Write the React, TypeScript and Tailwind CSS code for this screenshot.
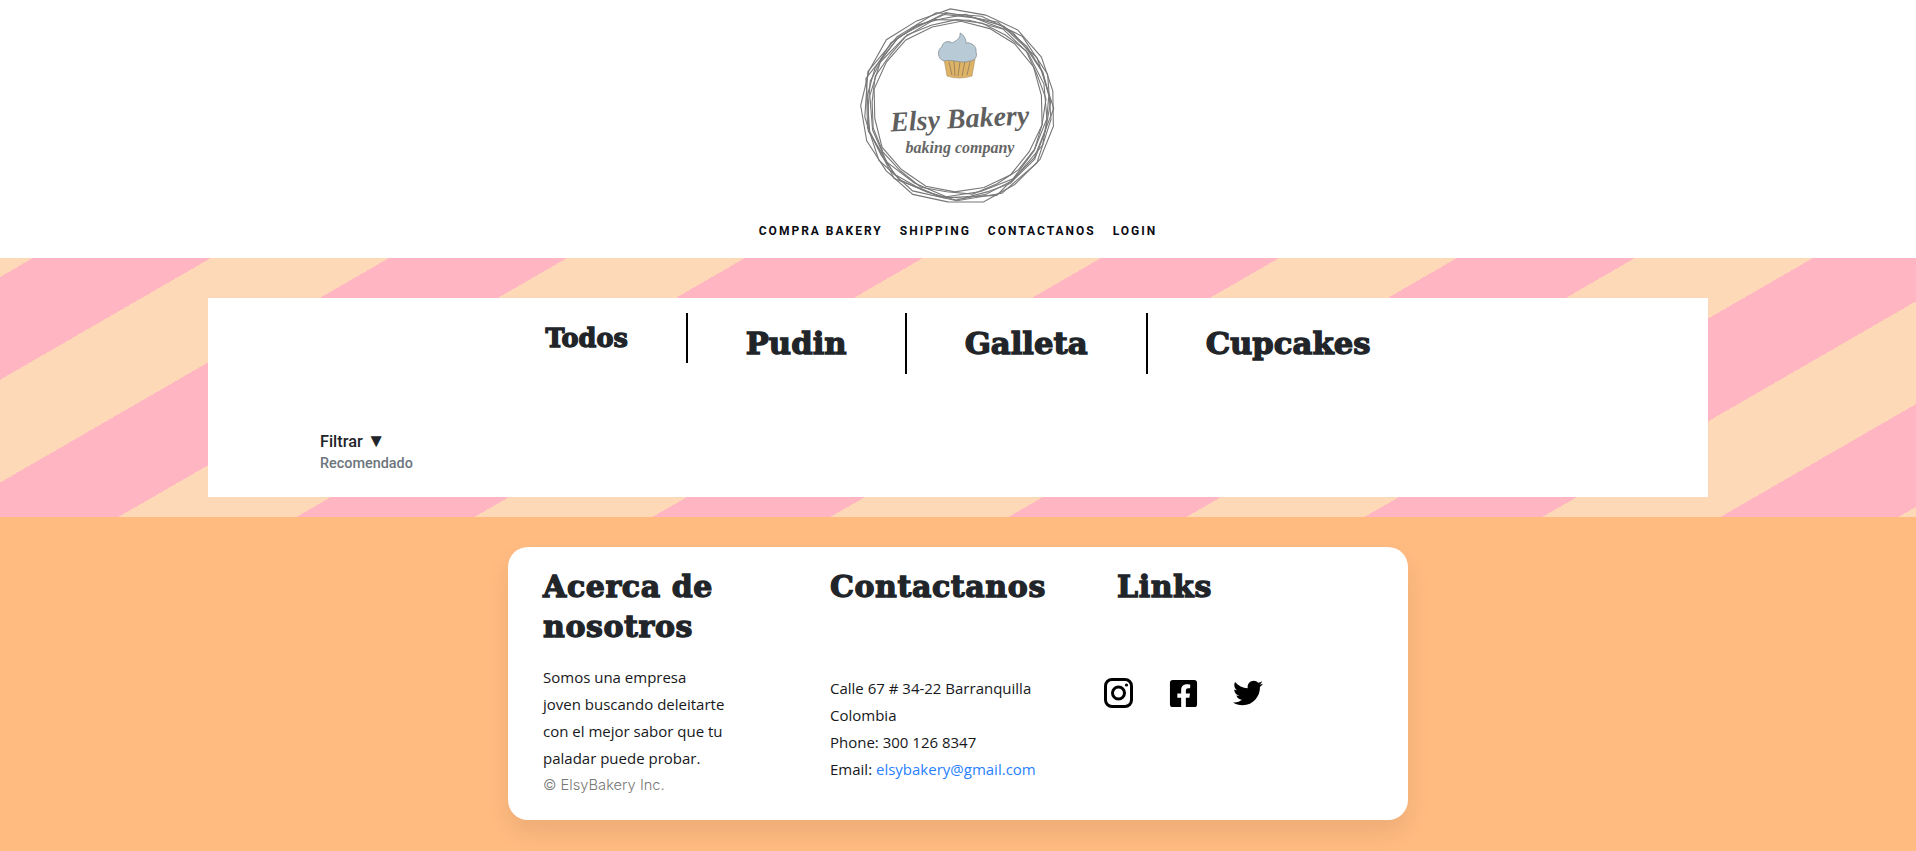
import { FaFacebookSquare, FaTwitter } from "react-icons/fa";

const anillos = [
  { r: 97, fase: 0.2, lados: 17, sesgo: 1.5 },
  { r: 95, fase: 1.1, lados: 13, sesgo: 2 },
  { r: 92, fase: 0.6, lados: 19, sesgo: 1.5 },
  { r: 94, fase: 2.3, lados: 11, sesgo: 2.5 },
  { r: 89, fase: 1.7, lados: 16, sesgo: 1.5 },
  { r: 87, fase: 2.9, lados: 21, sesgo: 1.5 },
  { r: 91, fase: 3.7, lados: 23, sesgo: 2 },
  { r: 85, fase: 4.4, lados: 18, sesgo: 1 },
];

function puntos(r: number, fase: number, lados: number, sesgo: number) {
  return Array.from({ length: lados }, (_, i) => {
    const a = fase + (i / lados) * Math.PI * 2;
    const radio = r + Math.sin(i * 2.7 + fase) * sesgo;
    return `${(100 + Math.cos(a) * radio).toFixed(1)},${(100 + Math.sin(a) * radio).toFixed(1)}`;
  }).join(" ");
}

function Logo() {
  return (
    <svg width="200" height="200" viewBox="0 0 200 200" className="block">
      {anillos.map((a) => (
        <polygon
          key={a.fase}
          points={puntos(a.r, a.fase, a.lados, a.sesgo)}
          fill="none"
          stroke="#777777"
          strokeWidth="1.1"
        />
      ))}
      {/* cupcake */}
      <path d="M86 52 L117 52 L114 69 Q101 73 89 69 Z" fill="#dfb366" stroke="#a98f63" strokeWidth="0.6" />
      <path
        d="M91 55 L94 68 M96 54 L97 69 M102 55 L100 69 M107 54 L104 69 M112 55 L109 68"
        stroke="#8a7a5c"
        strokeWidth="0.8"
        fill="none"
      />
      <path
        d="M86 54 C79 52 79 42 84 40 C84 35 91 33 94 36 C98 34 103 31 102 26 C106 28 108 32 108 36 C113 35 119 39 118 45 C120 50 116 54 112 54 C104 57 95 52 86 54 Z"
        fill="#b8cad6"
        stroke="#7d868c"
        strokeWidth="0.7"
      />
      <text
        x="102"
        y="121"
        textAnchor="middle"
        transform="rotate(-3 100 118)"
        className="font-['Liberation_Serif',serif] italic font-bold text-[28px]"
        fill="#5f5f5f"
      >
        Elsy Bakery
      </text>
      <text
        x="102"
        y="146"
        textAnchor="middle"
        className="font-['Liberation_Serif',serif] italic font-bold text-[16px]"
        fill="#666666"
      >
        baking company
      </text>
    </svg>
  );
}

function Instagram() {
  return (
    <svg width="30" height="30" viewBox="0 0 30 30" fill="none" stroke="black" strokeWidth="3">
      <rect x="1.5" y="1.5" width="26" height="27" rx="6.5" />
      <circle cx="14.5" cy="15" r="6" />
      <circle cx="22.5" cy="7" r="1.6" fill="black" stroke="none" />
    </svg>
  );
}

const tabs = [
  { nombre: "Todos", clase: "text-[25.5px] h-[50px] border-r-2 pt-[7px]" },
  { nombre: "Pudin", clase: "text-[30.7px] h-[61px] border-r-2 pt-[12px]" },
  { nombre: "Galleta", clase: "text-[30.7px] h-[61px] border-r-2 pt-[12px]" },
  { nombre: "Cupcakes", clase: "text-[30.7px] h-[61px] pt-[12px]" },
];

const titulo =
  "font-['DejaVu_Serif',serif] font-bold text-[#212529] [-webkit-text-stroke:1.3px_#212529]";

export default function App() {
  return (
    <div className="flex h-screen flex-col overflow-hidden bg-white font-['Open_Sans',sans-serif]">
      <header className="flex h-[258px] shrink-0 flex-col items-center pt-[7px]">
        <Logo />
        <nav className="mt-[16px] flex gap-[17px] font-['Roboto',sans-serif] text-[12px] font-bold leading-[16px] tracking-[2px] text-[#0b0b14]">
          <a>COMPRA BAKERY</a>
          <a>SHIPPING</a>
          <a>CONTACTANOS</a>
          <a>LOGIN</a>
        </nav>
      </header>

      <section className="h-[259px] shrink-0 bg-[repeating-linear-gradient(150deg,#fdd9b7_0,#fdd9b7_16.5px,#ffb5c2_16.5px,#ffb5c2_105.5px,#fdd9b7_105.5px,#fdd9b7_178px)] pt-[40px]">
        <div className="mx-auto h-[199px] w-[1500px] bg-white pt-[15px]">
          <div className="flex h-[117px] items-start justify-center">
            {tabs.map((t) => (
              <div key={t.nombre} className={`${t.clase} border-black px-[58px] leading-[36px] ${titulo}`}>
                {t.nombre}
              </div>
            ))}
          </div>
          <div className="pl-[112px] font-['Roboto',sans-serif] font-medium">
            <p className="text-[16.3px] leading-[23px] text-[#212529]">
              Filtrar <span className="text-[19px] leading-[22px]">▼</span>
            </p>
            <p className="text-[14.4px] leading-[21px] text-[#6c757d]">Recomendado</p>
          </div>
        </div>
      </section>

      <footer className="flex-1 bg-[#ffbb80] pt-[30px]">
        <div className="mx-auto flex h-[273px] w-[900px] rounded-[20px] bg-white pl-[35px] pt-[20px] text-[15px] leading-[27px] text-[#16181b] shadow-[0_12px_24px_rgba(0,0,0,0.08)]">
          <div className="w-[287px]">
            <h3 className={`${titulo} w-[240px] text-[30px] leading-[39.6px] tracking-[0.6px]`}>Acerca de nosotros</h3>
            <p className="mt-[18px] w-[185px]">Somos una empresa joven buscando deleitarte con el mejor sabor que tu paladar puede probar.</p>
            <p className="font-['Inter',sans-serif] text-[14.7px] font-light text-[#777777]">© ElsyBakery Inc.</p>
          </div>
          <div className="w-[287px]">
            <h3 className={`${titulo} text-[30px] leading-[39.6px] tracking-[0.6px]`}>Contactanos</h3>
            <p className="mt-[68px]">
              Calle 67 # 34-22 Barranquilla
              <br />
              Colombia
              <br />
              Phone: 300 126 8347
              <br />
              Email: <a className="text-[#2a7fff]">elsybakery@gmail.com</a>
            </p>
          </div>
          <div>
            <h3 className={`${titulo} text-[30px] leading-[39.6px] tracking-[0.6px]`}>Links</h3>
            <div className="-ml-[13px] mt-[71px] flex items-center gap-[34px]">
              <Instagram />
              <FaFacebookSquare size={31} color="black" />
              <FaTwitter size={30} color="black" />
            </div>
          </div>
        </div>
      </footer>
    </div>
  );
}
